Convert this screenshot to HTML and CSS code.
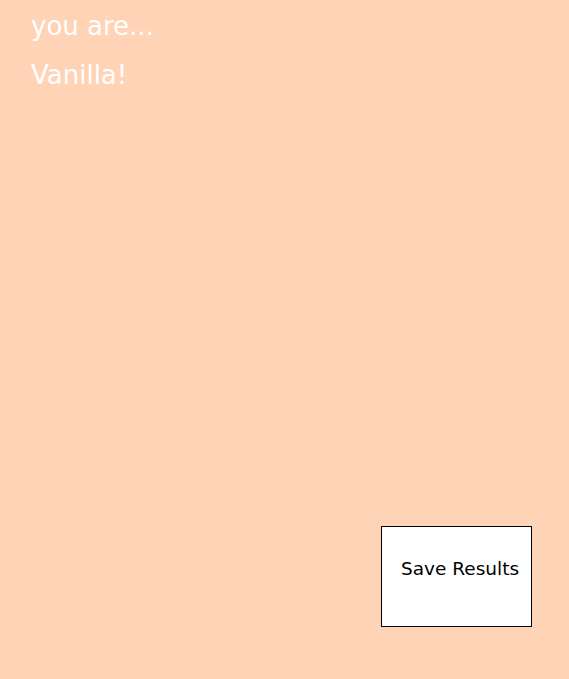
FILE: index.html
```html
<!DOCTYPE html>
<html>
<head>
<meta charset="utf-8">
<link rel="stylesheet" href="styles.css">
</head>
<body>
<main class="page">
  <h1 class="intro">you are...</h1>
  <h2 class="result">Vanilla!</h2>
  <div class="actions">
    <button class="save">Save Results</button>
  </div>
</main>
</body>
</html>
```
FILE: styles.css
```css
html, body {
  margin: 0;
  padding: 0;
}
body {
  background: #ffd3b6;
  font-family: "Comic Sans MS", "DejaVu Sans", sans-serif;
}
.page {
  display: flex;
  flex-direction: column;
  height: 679px;
  box-sizing: border-box;
  padding: 8px 37px 0 31px;
}
.intro, .result {
  margin: 0;
  color: #ffffff;
  font-weight: normal;
  font-size: 26px;
  line-height: 36px;
}
.intro {
  margin-bottom: 13px;
}
.actions {
  display: flex;
  justify-content: flex-end;
  margin-top: 433px;
}
.save {
  width: 151px;
  height: 101px;
  background: #ffffff;
  border: 1px solid #000000;
  font-family: "Comic Sans MS", "DejaVu Sans", sans-serif;
  font-size: 18.5px;
  color: #000000;
  padding: 0 0 16px 19px;
  text-align: left;
  cursor: pointer;
}
```
